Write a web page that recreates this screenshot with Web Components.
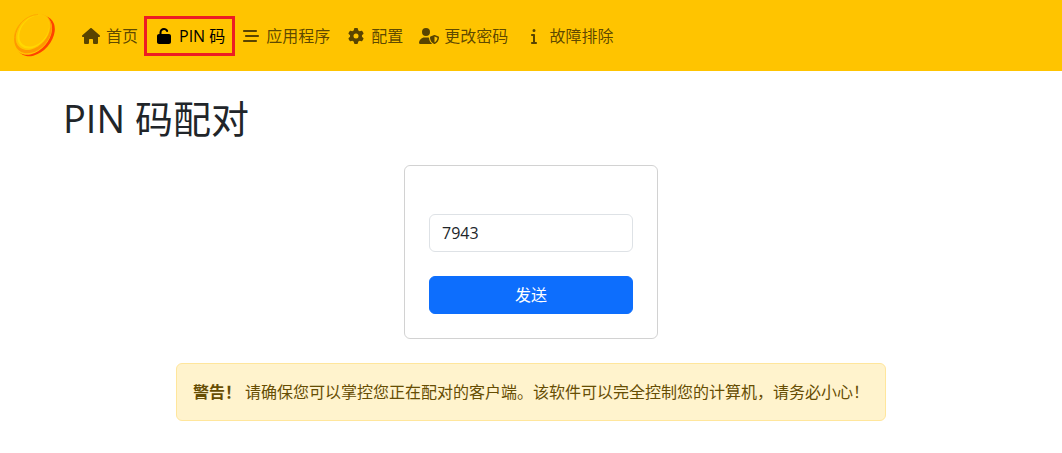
<!DOCTYPE html>
<html lang="zh-CN">
<head>
  <meta charset="UTF-8">
  <meta name="viewport" content="width=device-width, initial-scale=1">
  <title>PIN 码配对</title>
  <style>
    body {
      margin: 0;
      background-color: #fff;
      color: #212529;
      font-family: "Open Sans", "Noto Sans CJK SC", sans-serif;
      font-size: 16px;
      line-height: 24px;
    }
  </style>
</head>
<body>
  <app-navbar>
    <nav-item icon="home" href="#home">首页</nav-item>
    <nav-item icon="unlock" href="#pin" active>PIN 码</nav-item>
    <nav-item icon="stream" href="#apps">应用程序</nav-item>
    <nav-item icon="cog" href="#config">配置</nav-item>
    <nav-item icon="shield" href="#password">更改密码</nav-item>
    <nav-item icon="info" href="#troubleshooting">故障排除</nav-item>
  </app-navbar>
  <page-container heading="PIN 码配对">
    <pin-form value="7943">发送</pin-form>
    <warning-alert>
      <b slot="title">警告！</b>
      请确保您可以掌控您正在配对的客户端。该软件可以完全控制您的计算机，请务必小心！
    </warning-alert>
  </page-container>

  <script>
    const icons = {
      home: {
        box: "0 0 576 512",
        path: "M575.8 255.5c0 18-15 32.1-32 32.1h-32l.7 160.2c0 2.7-.2 5.4-.5 8.1V472c0 22.1-17.9 40-40 40H456c-1.1 0-2.2 0-3.3-.1c-1.4 .1-2.8 .1-4.2 .1H416 392c-22.1 0-40-17.9-40-40V448 384c0-17.7-14.3-32-32-32H256c-17.7 0-32 14.3-32 32v64 24c0 22.1-17.9 40-40 40H160 128.1c-1.5 0-3-.1-4.5-.2c-1.2 .1-2.4 .2-3.6 .2H104c-22.1 0-40-17.9-40-40V360c0-.9 0-1.9 .1-2.8V287.6H32c-18 0-32-14-32-32.1c0-9 3-17 10-24L266.4 8c7-7 15-8 22-8s15 2 21 7L564.8 231.5c8 7 12 15 11 24z"
      },
      unlock: {
        box: "0 0 448 512",
        path: "M144 144c0-44.2 35.8-80 80-80c31.9 0 59.4 18.6 72.3 45.7c7.6 16 26.7 22.8 42.6 15.2s22.8-26.7 15.2-42.6C331 33.7 281.5 0 224 0C144.5 0 80 64.5 80 144v48H64c-35.3 0-64 28.7-64 64V448c0 35.3 28.7 64 64 64H384c35.3 0 64-28.7 64-64V256c0-35.3-28.7-64-64-64H144V144z"
      },
      stream: {
        box: "0 0 512 512",
        path: "M0 96C0 78.3 14.3 64 32 64H416c17.7 0 32 14.3 32 32s-14.3 32-32 32H32C14.3 128 0 113.7 0 96zM64 256c0-17.7 14.3-32 32-32H480c17.7 0 32 14.3 32 32s-14.3 32-32 32H96c-17.7 0-32-14.3-32-32zM448 416c0 17.7-14.3 32-32 32H32c-17.7 0-32-14.3-32-32s14.3-32 32-32H416c17.7 0 32 14.3 32 32z"
      },
      cog: {
        box: "0 0 512 512",
        path: "M495.9 166.6c3.2 8.7 .5 18.4-6.4 24.6l-43.3 39.4c1.1 8.3 1.7 16.8 1.7 25.4s-.6 17.1-1.7 25.4l43.3 39.4c6.9 6.2 9.6 15.9 6.4 24.6c-4.4 11.9-9.7 23.3-15.8 34.3l-4.7 8.1c-6.6 11-14 21.4-22.1 31.2c-5.9 7.2-15.7 9.6-24.5 6.8l-55.7-17.7c-13.4 10.3-28.2 18.9-44 25.4l-12.5 57.1c-2 9.1-9 16.3-18.2 17.8c-13.8 2.3-28 3.5-42.5 3.5s-28.7-1.2-42.5-3.5c-9.2-1.5-16.2-8.7-18.2-17.8l-12.5-57.1c-15.8-6.5-30.6-15.1-44-25.4L83.1 425.9c-8.8 2.8-18.6 .3-24.5-6.8c-8.1-9.8-15.5-20.2-22.1-31.2l-4.7-8.1c-6.1-11-11.4-22.4-15.8-34.3c-3.2-8.7-.5-18.4 6.4-24.6l43.3-39.4C64.6 273.1 64 264.6 64 256s.6-17.1 1.7-25.4L22.4 191.2c-6.9-6.2-9.6-15.9-6.4-24.6c4.4-11.9 9.7-23.3 15.8-34.3l4.7-8.1c6.6-11 14-21.4 22.1-31.2c5.9-7.2 15.7-9.6 24.5-6.8l55.7 17.7c13.4-10.3 28.2-18.9 44-25.4l12.5-57.1c2-9.1 9-16.3 18.2-17.8C227.3 1.2 241.5 0 256 0s28.7 1.2 42.5 3.5c9.2 1.5 16.2 8.7 18.2 17.8l12.5 57.1c15.8 6.5 30.6 15.1 44 25.4l55.7-17.7c8.8-2.8 18.6-.3 24.5 6.8c8.1 9.8 15.5 20.2 22.1 31.2l4.7 8.1c6.1 11 11.4 22.4 15.8 34.3zM256 336a80 80 0 1 0 0-160 80 80 0 1 0 0 160z"
      },
      shield: {
        box: "0 0 640 512",
        path: "M224 256A128 128 0 1 0 224 0a128 128 0 1 0 0 256zm-45.7 48C79.8 304 0 383.8 0 482.3C0 498.7 13.3 512 29.7 512H418.3c1.8 0 3.5-.2 5.3-.5c-76.3-55.1-99.8-141-103.1-200.2c-16.1-4.8-33.1-7.3-50.7-7.3H178.3zm308.8-78.3l-120 48C358 277.4 352 286.2 352 296c0 63.3 25.9 168.8 134.8 214.2c5.9 2.5 12.6 2.5 18.5 0C614.1 464.8 640 359.3 640 296c0-9.8-6-18.6-15.1-22.3l-120-48c-5.7-2.3-12.1-2.3-17.8 0zM591.4 312c-3.9 50.7-27.2 116.7-95.4 149.7V273.8L591.4 312z"
      },
      info: {
        box: "0 0 192 512",
        path: "M48 80a48 48 0 1 1 96 0A48 48 0 1 1 48 80zM0 224c0-17.7 14.3-32 32-32H96c17.7 0 32 14.3 32 32V448h32c17.7 0 32 14.3 32 32s-14.3 32-32 32H32c-17.7 0-32-14.3-32-32s14.3-32 32-32H64V256H32c-17.7 0-32-14.3-32-32z"
      }
    };

    class AppNavbar extends HTMLElement {
      constructor() {
        super();
        this.attachShadow({ mode: "open" });
      }
      connectedCallback() {
        this.shadowRoot.innerHTML = `
          <style>
            :host {
              display: block;
              background-color: #ffc400;
            }
            .navbar {
              display: flex;
              flex-wrap: wrap;
              align-items: center;
              padding: 8px 12px;
            }
            .navbar__brand {
              display: flex;
              padding: 5px 0;
              margin-right: 16px;
            }
            .navbar__logo {
              display: block;
              width: 45px;
              height: 45px;
            }
            .navbar__links {
              display: flex;
              flex-wrap: wrap;
            }
          </style>
          <nav class="navbar">
            <a class="navbar__brand" href="#home">
              <svg class="navbar__logo" viewBox="0 0 45 45" aria-hidden="true">
                <ellipse rx="23" ry="16" transform="translate(23.5 23) rotate(-49)" fill="#ff4200"/>
                <ellipse rx="22.5" ry="16" transform="translate(21 21.8) rotate(-49)" fill="#ffc400"/>
                <ellipse rx="22" ry="16" transform="translate(21 20.7) rotate(-49)" fill="#ff9800"/>
                <ellipse rx="20.5" ry="14.5" transform="translate(21 18.8) rotate(-49)" fill="#ffc400"/>
                <ellipse rx="18.5" ry="13.5" transform="translate(21.3 19) rotate(-49)" fill="#ffd800"/>
                <ellipse rx="17.5" ry="12.5" transform="translate(22.2 18) rotate(-49)" fill="#ffc400"/>
                <path d="M2.500 24C3 13 14 2 26 1.500" fill="none" stroke="#ffa000" stroke-width=".7"/>
              </svg>
            </a>
            <div class="navbar__links"><slot></slot></div>
          </nav>
        `;
      }
    }

    class NavItem extends HTMLElement {
      constructor() {
        super();
        this.attachShadow({ mode: "open" });
      }
      connectedCallback() {
        const icon = icons[this.getAttribute("icon")];
        this.shadowRoot.innerHTML = `
          <style>
            :host {
              display: block;
            }
            .link {
              position: relative;
              display: flex;
              align-items: center;
              gap: 5px;
              padding: 8px;
              color: rgba(0, 0, 0, 0.65);
              text-decoration: none;
              white-space: nowrap;
            }
            .link:hover {
              color: rgba(0, 0, 0, 0.8);
            }
            .link__icon {
              width: 20px;
              height: 16px;
              fill: currentColor;
            }
            :host([active]) .link {
              color: #000;
            }
            /* red frame, drawn over the gap between the links */
            :host([active]) .link::after {
              content: "";
              position: absolute;
              inset: 0 -2px;
              border: 3px solid #ed1c24;
            }
          </style>
          <a class="link" href="${this.getAttribute("href")}">
            <svg class="link__icon" viewBox="${icon.box}" aria-hidden="true"><path d="${icon.path}"/></svg>
            <span><slot></slot></span>
          </a>
        `;
      }
    }

    class PageContainer extends HTMLElement {
      constructor() {
        super();
        this.attachShadow({ mode: "open" });
      }
      connectedCallback() {
        this.shadowRoot.innerHTML = `
          <style>
            :host {
              display: block;
              box-sizing: border-box;
              max-width: 960px;
              margin: 0 auto;
              padding: 24px 12px;
            }
            h1 {
              margin: 0 0 24px;
              font-size: 38px;
              font-weight: 400;
              line-height: 46px;
            }
            .content {
              display: flex;
              flex-direction: column;
              align-items: center;
              gap: 24px;
            }
          </style>
          <main>
            <h1>${this.getAttribute("heading")}</h1>
            <div class="content"><slot></slot></div>
          </main>
        `;
      }
    }

    class PinForm extends HTMLElement {
      constructor() {
        super();
        this.attachShadow({ mode: "open" });
      }
      connectedCallback() {
        this.shadowRoot.innerHTML = `
          <style>
            :host {
              display: block;
            }
            .card {
              display: flex;
              flex-direction: column;
              gap: 24px;
              padding: 48px 24px 24px;
              border: 1px solid rgba(0, 0, 0, 0.175);
              border-radius: 6px;
            }
            input, button {
              box-sizing: border-box;
              padding: 6px 12px;
              border-radius: 6px;
              font: inherit;
            }
            input {
              width: 204px;
              border: 1px solid #dee2e6;
              background-color: #fff;
              color: #212529;
            }
            button {
              border: 1px solid #0d6efd;
              background-color: #0d6efd;
              color: #fff;
              cursor: pointer;
            }
          </style>
          <form class="card">
            <input type="text" inputmode="numeric" aria-label="PIN 码" value="${this.getAttribute("value")}">
            <button type="submit"><slot></slot></button>
          </form>
        `;
        this.shadowRoot.querySelector("form").addEventListener("submit", (e) => e.preventDefault());
      }
    }

    class WarningAlert extends HTMLElement {
      constructor() {
        super();
        this.attachShadow({ mode: "open" });
      }
      connectedCallback() {
        this.shadowRoot.innerHTML = `
          <style>
            :host {
              display: block;
              padding: 16px;
              border: 1px solid #ffe69c;
              border-radius: 6px;
              background-color: #fff3cd;
              color: #664d03;
            }
          </style>
          <div role="alert"><slot name="title"></slot> <slot></slot></div>
        `;
      }
    }

    customElements.define("app-navbar", AppNavbar);
    customElements.define("nav-item", NavItem);
    customElements.define("page-container", PageContainer);
    customElements.define("pin-form", PinForm);
    customElements.define("warning-alert", WarningAlert);
  </script>
</body>
</html>
